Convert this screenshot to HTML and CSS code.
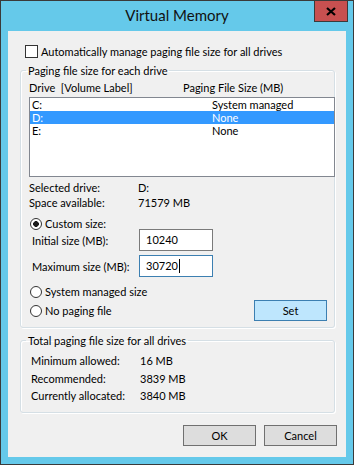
FILE: index.html
```html
<!DOCTYPE html>
<html lang="en">
<head>
    <meta charset="UTF-8">
    <title>Virtual Memory</title>
    <link rel="stylesheet" href="styles.css">
</head>
<body>
    <div class="window">
        <div class="titlebar">
            <span class="title">Virtual Memory</span>
            <div class="close-btn">
                <svg width="10" height="9" viewBox="0 0 10 9">
                    <path d="M1 1 L9 8 M9 1 L1 8" stroke="#000" stroke-width="2.2" fill="none"/>
                </svg>
            </div>
        </div>
        <div class="client">
            <div class="check-row">
                <span class="checkbox"></span>
                <span>Automatically manage paging file size for all drives</span>
            </div>

            <fieldset class="group group-drives">
                <legend>Paging file size for each drive</legend>
                <div class="list-header">
                    <span>Drive&nbsp;&nbsp;[Volume Label]</span>
                    <span>Paging File Size (MB)</span>
                </div>
                <div class="listbox">
                    <div class="list-row"><span>C:</span><span>System managed</span></div>
                    <div class="list-row selected"><span>D:</span><span>None</span></div>
                    <div class="list-row"><span>E:</span><span>None</span></div>
                </div>
                <div class="info">
                    <span>Selected drive:</span><span>D:</span>
                    <span>Space available:</span><span>71579 MB</span>
                </div>
                <div class="radio-row first">
                    <span class="radio checked"></span>
                    <span>Custom size:</span>
                </div>
                <div class="size-row initial">
                    <span class="size-label">Initial size (MB):</span>
                    <div class="textbox">10240</div>
                </div>
                <div class="size-row maximum">
                    <span class="size-label">Maximum size (MB):</span>
                    <div class="textbox focused">30720<span class="caret"></span></div>
                </div>
                <div class="radio-row system">
                    <span class="radio"></span>
                    <span>System managed size</span>
                </div>
                <div class="set-row">
                    <div class="radio-row">
                        <span class="radio"></span>
                        <span>No paging file</span>
                    </div>
                    <div class="button set-btn">Set</div>
                </div>
            </fieldset>

            <fieldset class="group group-total">
                <legend>Total paging file size for all drives</legend>
                <div class="totals">
                    <span>Minimum allowed:</span><span>16 MB</span>
                    <span>Recommended:</span><span>3839 MB</span>
                    <span>Currently allocated:</span><span>3840 MB</span>
                </div>
            </fieldset>

            <div class="buttons">
                <div class="button">OK</div>
                <div class="button">Cancel</div>
            </div>
        </div>
    </div>
</body>
</html>
```

FILE: styles.css
```css
body {
    margin: 0;
    font-family: Lato, "Liberation Sans", sans-serif;
    font-size: 11px;
    color: #000;
    background: #fff;
}
.window {
    position: relative;
    width: 354px;
    height: 465px;
    box-sizing: border-box;
    border: 1px solid #3a3a3a;
    background: #65c9ea;
    padding: 0 7px 7px 7px;
}
.titlebar {
    height: 30px;
    line-height: 28px;
    text-align: center;
}
.title {
    font-size: 15px;
    color: #111;
}
.close-btn {
    position: absolute;
    top: 0;
    right: 5px;
    width: 34px;
    height: 21px;
    box-sizing: border-box;
    background: #c75050;
    border: 1px solid #3a3a3a;
    border-top: none;
    display: flex;
    align-items: center;
    justify-content: center;
}
.client {
    height: 426px;
    background: #f0f0f0;
    overflow: hidden;
}
.check-row {
    display: flex;
    align-items: center;
    height: 13px;
    line-height: 13px;
    margin: 14px 0 0 17px;
}
.checkbox {
    width: 13px;
    height: 13px;
    box-sizing: border-box;
    border: 1px solid #333;
    background: #fff;
    margin-right: 3px;
}
.group {
    margin: 6px 11px 0 12px;
    padding: 0 0 0 8px;
    border: 1px solid #d5dfe5;
    border-radius: 3px;
    box-shadow: inset 1px 1px 0 #fff, 1px 1px 0 #fff;
    min-width: 0;
}
.group legend {
    margin-left: -3px;
    padding: 0 2px;
    line-height: 13px;
}
.list-header {
    display: grid;
    grid-template-columns: 154px 1fr;
    line-height: 13px;
    margin-top: 4px;
}
.listbox {
    margin: 3px -1px 0 0;
    height: 80px;
    box-sizing: border-box;
    border: 1px solid #828790;
    background: #fff;
}
.list-row {
    display: grid;
    grid-template-columns: 180px 1fr;
    height: 13px;
    line-height: 13px;
    padding-left: 2px;
}
.list-row.selected {
    background: #3399ff;
    color: #fff;
}
.info {
    display: grid;
    grid-template-columns: 109px 1fr;
    line-height: 15px;
    margin-top: 3px;
}
.radio-row {
    display: flex;
    align-items: center;
    height: 15px;
    padding-left: 1px;
}
.radio-row.first {
    margin-top: 6px;
}
.radio-row.system {
    margin-top: 7px;
}
.radio {
    width: 12px;
    height: 12px;
    box-sizing: border-box;
    border: 1px solid #333;
    border-radius: 50%;
    background: #fff;
    margin-right: 3px;
}
.radio.checked {
    background: radial-gradient(circle, #1a1a1a 0 2.6px, #fff 3.1px);
}
.size-row {
    display: flex;
    align-items: center;
    height: 22px;
    padding-left: 3px;
}
.size-row.initial {
    margin-top: -2px;
}
.size-row.maximum {
    margin-top: 4px;
}
.size-label {
    width: 107px;
}
.textbox {
    width: 74px;
    height: 22px;
    box-sizing: border-box;
    border: 1px solid #7a7a7a;
    background: #fff;
    line-height: 20px;
    padding-left: 6px;
}
.textbox.focused {
    border-color: #3c7fb1;
}
.caret {
    display: inline-block;
    width: 1px;
    height: 14px;
    background: #000;
    vertical-align: -3px;
    margin-left: 1px;
}
.set-row {
    display: flex;
    align-items: center;
    justify-content: space-between;
    margin: 1px 7px 6px 0;
}
.button {
    width: 73px;
    height: 21px;
    box-sizing: border-box;
    border: 1px solid #707070;
    background: #dddddd;
    text-align: center;
    line-height: 19px;
}
.set-btn {
    background: #bee6fd;
    border-color: #3c7fb1;
}
.group-total {
    padding-left: 10px;
}
.group-total legend {
    margin-left: -5px;
}
.totals {
    display: grid;
    grid-template-columns: 109px 1fr;
    line-height: 17.5px;
    margin: 5px 0 7px 0;
}
.buttons {
    display: flex;
    justify-content: flex-end;
    gap: 8px;
    margin-top: 12px;
    padding-right: 9px;
}
```
